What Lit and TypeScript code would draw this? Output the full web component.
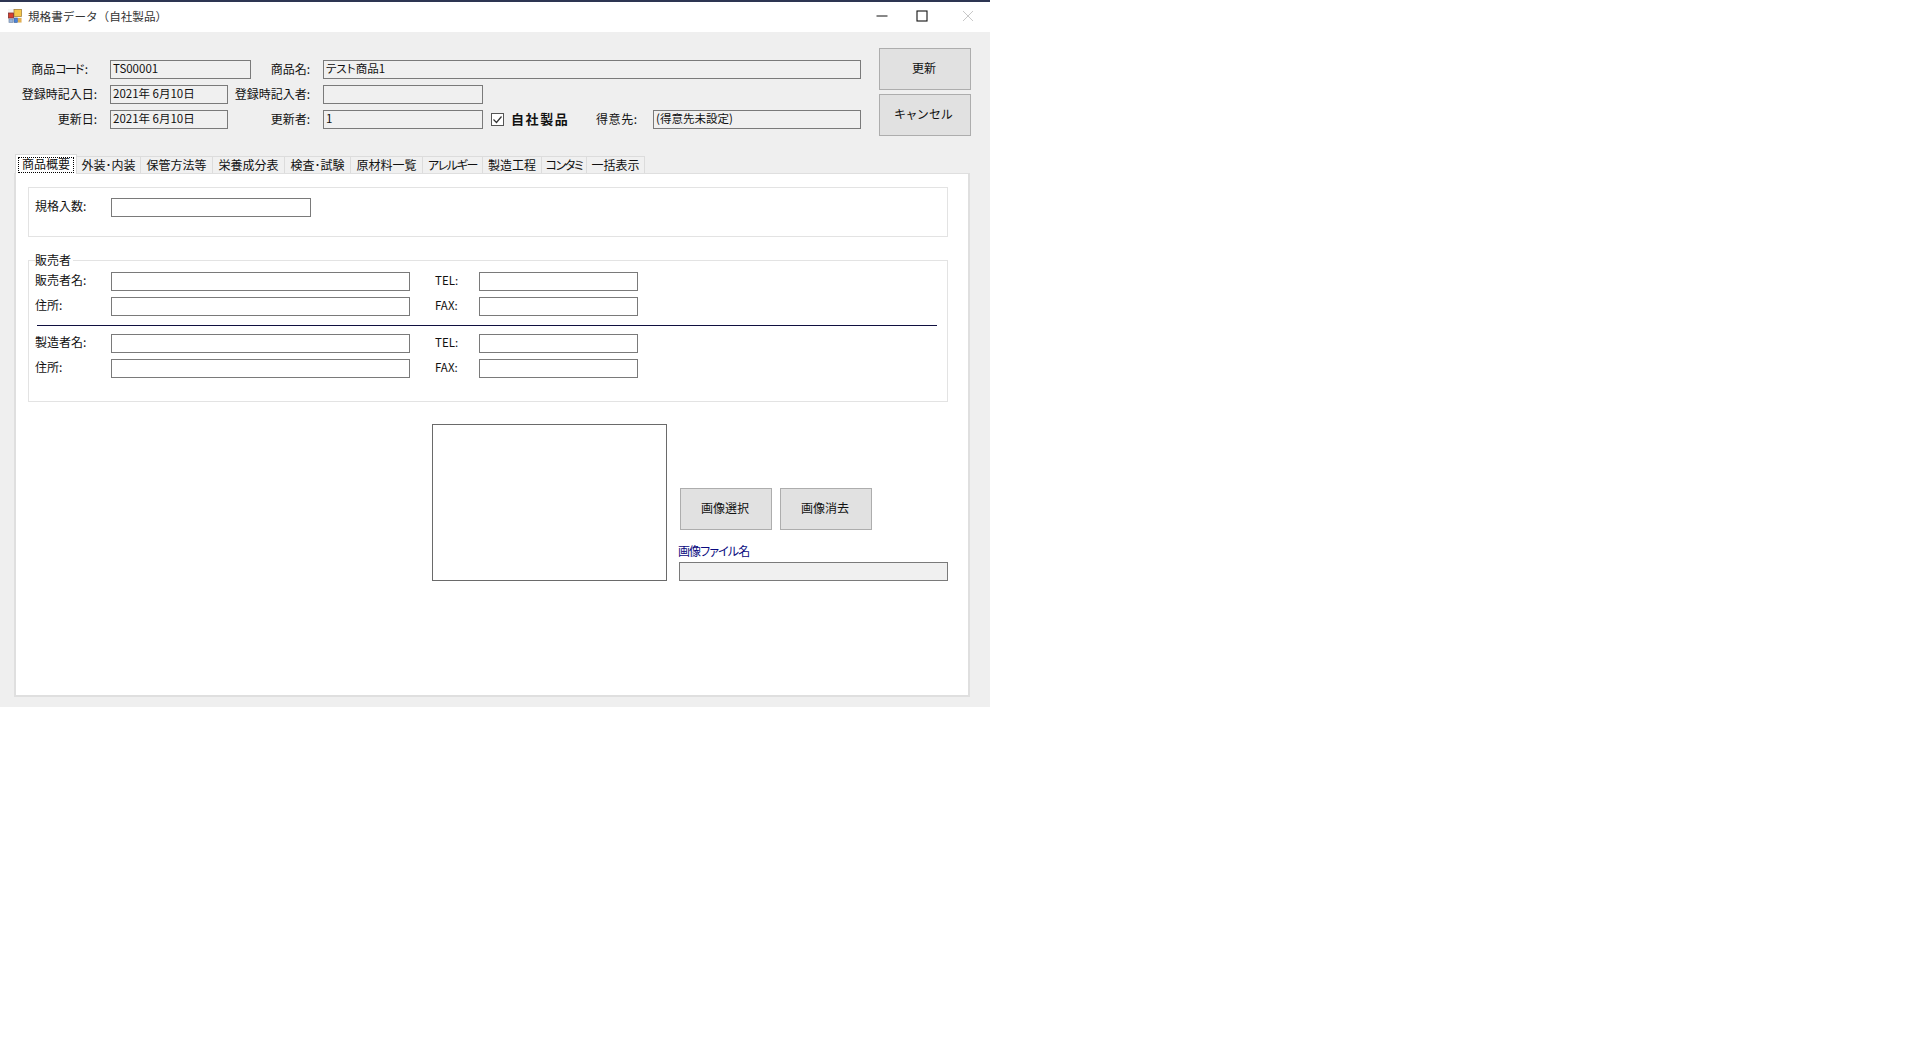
import { LitElement, html, css } from "lit";
import { customElement } from "lit/decorators.js";

const tabs = [
  ["商品概要", 62, ""],
  ["外装･内装", 64, ""],
  ["保管方法等", 72, ""],
  ["栄養成分表", 72, ""],
  ["検査･試験", 66, ""],
  ["原材料一覧", 72, ""],
  ["アレルギー", 60, "tight"],
  ["製造工程", 59, ""],
  ["コンタミ", 45, "tight"],
  ["一括表示", 58, ""],
] as const;

@customElement("app-root")
export class AppRoot extends LitElement {
  static styles = css`
    :host {
      display: block;
      height: 1040px;
      background: #fff;
      font-family: "Noto Sans CJK JP", "Liberation Sans", sans-serif;
      font-size: 12px;
      line-height: 19px;
      color: #111;
      font-feature-settings: "palt";
    }
    * { box-sizing: border-box; }
    .window {
      width: 990px;
      height: 707px;
      background: #efefef;
      display: flex;
      flex-direction: column;
    }
    .titlebar {
      height: 32px;
      flex: none;
      background: #fff;
      border-top: 2px solid #2d3552;
      padding-bottom: 2px;
      display: flex;
      align-items: center;
      color: #333;
    }
    .appicon { width: 14px; height: 14px; margin: 0 6px 0 8px; flex: none; }
    .ttext { flex: 1; font-size: 11.6px; font-feature-settings: normal; }
    .winbtn { width: 46px; height: 28px; display: flex; align-items: center; justify-content: center; flex: none; }
    .winbtn.min { width: 34px; }
    .winbtn svg { width: 12px; height: 12px; display: block; }
    .winbtns { display: flex; margin-right: -1px; }
    .head {
      display: flex;
      height: 122px;
      flex: none;
      padding-top: 16px;
    }
    .fields {
      width: 879px;
      padding-top: 12px;
      display: flex;
      flex-direction: column;
      gap: 6px;
      flex: none;
    }
    .row { display: flex; height: 19px; align-items: center; }
    .l1, .l2, .tlabel, .cust, .own { padding-bottom: 2px; }
    .l1 { width: 97px; text-align: right; margin-right: 13px; white-space: nowrap; flex: none; }
    .l1.code { padding-right: 9px; }
    .narrow { letter-spacing: -1.8px; margin-right: 2px; }
    .l2 { text-align: right; margin-right: 13px; white-space: nowrap; flex: none; }
    .w59 { width: 59px; }
    .w82 { width: 82px; }
    .box {
      height: 19px;
      border: 1px solid #7a7a7a;
      padding: 0 2px;
      line-height: 15px;
      white-space: nowrap;
      flex: none;
      background: #f0f0f0;
      font-size: 11.5px;
    }
    .box.white { background: #fff; }
    .w141 { width: 141px; }
    .w118 { width: 118px; }
    .w538 { width: 538px; }
    .w160 { width: 160px; }
    .w208 { width: 208px; }
    .w200 { width: 200px; }
    .w299 { width: 299px; }
    .w159 { width: 159px; }
    .w269 { width: 269px; }
    .check {
      width: 13px;
      height: 13px;
      margin: 0 7px 0 8px;
      flex: none;
      display: block;
    }
    .own { font-weight: 700; font-size: 13px; width: 85px; letter-spacing: 1.6px; flex: none; white-space: nowrap; }
    .cust { width: 57px; flex: none; white-space: nowrap; letter-spacing: 0.6px; }
    .btns { display: flex; flex-direction: column; gap: 4px; }
    .btn {
      width: 92px;
      height: 42px;
      background: #e1e1e1;
      border: 1px solid #adadad;
      padding: 0 2px 4px 0;
      display: flex;
      align-items: center;
      justify-content: center;
      flex: none;
    }
    .btn.wide { letter-spacing: 1px; }
    .tabwrap { margin-left: 14px; width: 956px; position: relative; flex: none; }
    .tabs { display: flex; height: 19px; align-items: flex-end; padding-left: 1px; position: relative; z-index: 1; }
    .tab {
      height: 17px;
      border: 1px solid #dcdcdc;
      border-left: 0;
      border-bottom: 0;
      background: #f0f0f0;
      text-align: center;
      line-height: 16px;
      white-space: nowrap;
      flex: none;
    }
    .tab.tight { letter-spacing: -1.4px; }
    .tab.on {
      height: 20px;
      background: #fff;
      border: 1px solid #d9d9d9;
      border-bottom: 0;
      padding: 2px 2px 0;
      margin-bottom: -1px;
      line-height: 11px;
    }
    .focus { border: 1px dotted #000; height: 16px; display: block; }
    .panel {
      height: 524px;
      background: #fff;
      border: 2px solid #dfdfdf;
      border-top-width: 1px;
      padding: 13px 20px 0 12px;
    }
    .group { border: 1px solid #e3e3e3; width: 920px; position: relative; }
    .g1 { height: 50px; padding: 10px 0 0 6px; }
    .g2 {
      height: 142px;
      margin-top: 23px;
      padding: 11px 0 0 6px;
      display: flex;
      flex-direction: column;
      gap: 6px;
    }
    .legend {
      position: absolute;
      top: -9px;
      left: 6px;
      padding: 0 2px 0 0;
      background: #fff;
      line-height: 15px;
    }
    .glabel { width: 76px; flex: none; white-space: nowrap; padding-bottom: 4px; }
    .tlabel { width: 44px; margin-left: 25px; flex: none; font-size: 11.5px; }
    .rule { height: 1px; background: #101040; width: 900px; margin: 3px 0 2px 2px; flex: none; }
    .media { display: flex; margin: 22px 0 0 404px; }
    .picture { width: 235px; height: 157px; background: #fff; border: 1px solid #6a6a6a; flex: none; }
    .mright { margin-left: 12px; padding-top: 64px; width: 269px; }
    .mbtns { display: flex; gap: 8px; padding-left: 1px; }
    .fname { color: #0a0a80; line-height: 12px; padding-bottom: 4px; margin: 15px 0 1px -1px; letter-spacing: -0.9px; }
  `;

  render() {
    const minus = html`<svg viewBox="0 0 12 12"><path d="M0.5 6h11" stroke="#111" stroke-width="1" /></svg>`;
    const max = html`<svg viewBox="0 0 12 12"><rect x="1" y="1" width="10" height="10" fill="none" stroke="#111" stroke-width="1.1" /></svg>`;
    const cross = html`<svg viewBox="0 0 12 12"><path d="M1 1l10 10M11 1L1 11" stroke="#c8c8c8" stroke-width="1" /></svg>`;
    return html`
      <div class="window">
        <div class="titlebar">
          <svg class="appicon" viewBox="0 0 14 14">
            <rect x="0" y="0" width="14" height="14" fill="#f4f4f4" />
            <rect x="6" y="0.5" width="7.5" height="7" fill="#f5c84a" stroke="#a8843c" stroke-width="0.8" />
            <rect x="0.5" y="4" width="5" height="5" fill="#d8402c" stroke="#803030" stroke-width="0.8" />
            <rect x="6" y="9" width="3.5" height="4.5" fill="#4a82d8" stroke="#406090" stroke-width="0.6" />
            <rect x="1" y="10" width="4" height="3.5" fill="#9ab4d8" stroke="#7088a8" stroke-width="0.6" />
            <rect x="10" y="9" width="3.5" height="4.5" fill="#e4b050" />
          </svg>
          <span class="ttext">規格書データ（自社製品）</span>
          <div class="winbtns">
            <div class="winbtn min">${minus}</div>
            <div class="winbtn">${max}</div>
            <div class="winbtn">${cross}</div>
          </div>
        </div>

        <div class="head">
          <div class="fields">
            <div class="row">
              <span class="l1 code">商品<span class="narrow">コード</span>:</span>
              <div class="box w141">TS00001</div>
              <span class="l2 w59">商品名:</span>
              <div class="box w538">テスト商品1</div>
            </div>
            <div class="row">
              <span class="l1">登録時記入日:</span>
              <div class="box w118">2021年 6月10日</div>
              <span class="l2 w82">登録時記入者:</span>
              <div class="box w160"></div>
            </div>
            <div class="row">
              <span class="l1">更新日:</span>
              <div class="box w118">2021年 6月10日</div>
              <span class="l2 w82">更新者:</span>
              <div class="box w160">1</div>
              <svg class="check" viewBox="0 0 13 13">
                <rect x="0.5" y="0.5" width="12" height="12" fill="#fff" stroke="#555" />
                <path d="M2.5 6.5l3 3 5-6" fill="none" stroke="#333" stroke-width="1.2" />
              </svg>
              <span class="own">自社製品</span>
              <span class="cust">得意先:</span>
              <div class="box w208">(得意先未設定)</div>
            </div>
          </div>
          <div class="btns">
            <div class="btn">更新</div>
            <div class="btn wide">キャンセル</div>
          </div>
        </div>

        <div class="tabwrap">
          <div class="tabs">
            ${tabs.map(
              ([t, w, cls], i) => html`<div
                class="tab ${i === 0 ? "on" : ""} ${cls}"
                style="width:${w}px"
              >${i === 0 ? html`<span class="focus">${t}</span>` : t}</div>`
            )}
          </div>
          <div class="panel">
            <div class="group g1">
              <div class="row">
                <span class="glabel">規格入数:</span>
                <div class="box white w200"></div>
              </div>
            </div>
            <div class="group g2">
              <span class="legend">販売者</span>
              <div class="row">
                <span class="glabel">販売者名:</span>
                <div class="box white w299"></div>
                <span class="tlabel">TEL:</span>
                <div class="box white w159"></div>
              </div>
              <div class="row">
                <span class="glabel">住所:</span>
                <div class="box white w299"></div>
                <span class="tlabel">FAX:</span>
                <div class="box white w159"></div>
              </div>
              <div class="rule"></div>
              <div class="row">
                <span class="glabel">製造者名:</span>
                <div class="box white w299"></div>
                <span class="tlabel">TEL:</span>
                <div class="box white w159"></div>
              </div>
              <div class="row">
                <span class="glabel">住所:</span>
                <div class="box white w299"></div>
                <span class="tlabel">FAX:</span>
                <div class="box white w159"></div>
              </div>
            </div>
            <div class="media">
              <div class="picture"></div>
              <div class="mright">
                <div class="mbtns">
                  <div class="btn">画像選択</div>
                  <div class="btn">画像消去</div>
                </div>
                <div class="fname">画像ファイル名</div>
                <div class="box w269"></div>
              </div>
            </div>
          </div>
        </div>
      </div>
    `;
  }
}
